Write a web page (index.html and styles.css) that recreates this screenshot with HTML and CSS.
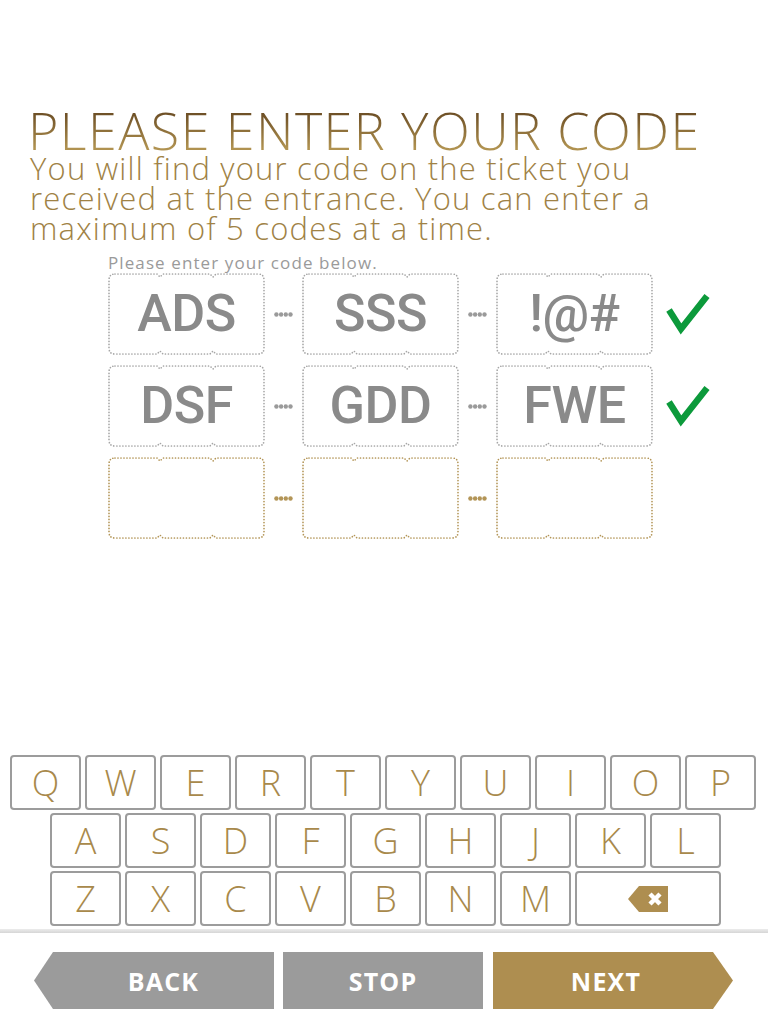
FILE: index.html
```html
<!DOCTYPE html>
<html>
<head>
<meta charset="utf-8">
<link rel="stylesheet" href="styles.css">
</head>
<body>
<svg class="defs" width="0" height="0" aria-hidden="true">
  <symbol id="ticket" viewBox="0 0 157 82">
    <path d="M7,1 H49 L52,4 L55,1 H102 L105,4 L108,1 H150 Q156,1 156,7 V75 Q156,81 150,81 H108 L105,78 L102,81 H55 L52,78 L49,81 H7 Q1,81 1,75 V7 Q1,1 7,1 Z" fill="none" stroke="currentColor" stroke-width="1.7" stroke-linecap="round" stroke-dasharray="0 3"/>
  </symbol>
  <symbol id="dots" viewBox="0 0 19 5">
    <circle cx="2.4" cy="2.5" r="2.2" fill="currentColor"/>
    <circle cx="7.1" cy="2.5" r="2.2" fill="currentColor"/>
    <circle cx="11.8" cy="2.5" r="2.2" fill="currentColor"/>
    <circle cx="16.5" cy="2.5" r="2.2" fill="currentColor"/>
  </symbol>
  <symbol id="check" viewBox="0 0 44 44">
    <polyline points="3,18 15,37 41,4" fill="none" stroke="currentColor" stroke-width="6.5"/>
  </symbol>
</svg>
<div class="page">
  <header class="header">
    <h1 class="title">PLEASE ENTER YOUR CODE</h1>
    <p class="subtitle">You will find your code on the ticket you<br>received at the entrance. You can enter a<br>maximum of 5 codes at a time.</p>
  </header>

  <section class="codes">
    <div class="hint">Please enter your code below.</div>
    <div class="code-row filled">
      <div class="box"><svg class="ticket"><use href="#ticket"/></svg><span class="code">ADS</span></div>
      <div class="link"><svg class="dots"><use href="#dots"/></svg></div>
      <div class="box"><svg class="ticket"><use href="#ticket"/></svg><span class="code">SSS</span></div>
      <div class="link"><svg class="dots"><use href="#dots"/></svg></div>
      <div class="box"><svg class="ticket"><use href="#ticket"/></svg><span class="code">!@#</span></div>
      <svg class="check"><use href="#check"/></svg>
    </div>
    <div class="code-row filled">
      <div class="box"><svg class="ticket"><use href="#ticket"/></svg><span class="code">DSF</span></div>
      <div class="link"><svg class="dots"><use href="#dots"/></svg></div>
      <div class="box"><svg class="ticket"><use href="#ticket"/></svg><span class="code">GDD</span></div>
      <div class="link"><svg class="dots"><use href="#dots"/></svg></div>
      <div class="box"><svg class="ticket"><use href="#ticket"/></svg><span class="code">FWE</span></div>
      <svg class="check"><use href="#check"/></svg>
    </div>
    <div class="code-row empty">
      <div class="box"><svg class="ticket"><use href="#ticket"/></svg></div>
      <div class="link"><svg class="dots"><use href="#dots"/></svg></div>
      <div class="box"><svg class="ticket"><use href="#ticket"/></svg></div>
      <div class="link"><svg class="dots"><use href="#dots"/></svg></div>
      <div class="box"><svg class="ticket"><use href="#ticket"/></svg></div>
    </div>
  </section>

  <section class="keyboard">
    <div class="kb-row first">
      <div class="key">Q</div><div class="key">W</div><div class="key">E</div><div class="key">R</div><div class="key">T</div><div class="key">Y</div><div class="key">U</div><div class="key">I</div><div class="key">O</div><div class="key">P</div>
    </div>
    <div class="kb-row">
      <div class="key">A</div><div class="key">S</div><div class="key">D</div><div class="key">F</div><div class="key">G</div><div class="key">H</div><div class="key">J</div><div class="key">K</div><div class="key">L</div>
    </div>
    <div class="kb-row">
      <div class="key">Z</div><div class="key">X</div><div class="key">C</div><div class="key">V</div><div class="key">B</div><div class="key">N</div><div class="key">M</div>
      <div class="key wide">
        <svg class="backspace" viewBox="0 0 40 26"><path d="M0,13 L11,0 H40 V26 H11 Z" fill="#ae8e50"/><path d="M22,8 L32,18 M32,8 L22,18" stroke="#fff" stroke-width="4.5"/></svg>
      </div>
    </div>
  </section>

  <div class="separator"></div>

  <footer class="footer">
    <div class="btn back">BACK</div>
    <div class="btn stop">STOP</div>
    <div class="btn next">NEXT</div>
  </footer>
</div>
</body>
</html>
```

FILE: styles.css
```css
html, body {
  margin: 0;
  padding: 0;
  background: #fff;
}

.defs {
  position: absolute;
  width: 0;
  height: 0;
  overflow: hidden;
}

.page {
  width: 768px;
  height: 1024px;
  display: flex;
  flex-direction: column;
  font-family: "Open Sans", "DejaVu Sans", sans-serif;
}

.header {
  padding: 104px 0 0 28px;
}

.title {
  margin: 0;
  font-size: 52px;
  line-height: 52px;
  font-weight: 300;
  letter-spacing: 1.45px;
  white-space: nowrap;
  background: linear-gradient(to bottom, #6f5127 20%, #b09250 85%);
  -webkit-background-clip: text;
  background-clip: text;
  color: transparent;
  display: inline-block;
}

.subtitle {
  margin: -3px 0 0 2px;
  font-size: 31px;
  line-height: 30px;
  font-weight: 300;
  letter-spacing: 1.2px;
  color: #a08245;
  white-space: nowrap;
}

.codes {
  padding-left: 108px;
}

.hint {
  margin-top: 10px;
  font-size: 17px;
  line-height: 20px;
  letter-spacing: 1.1px;
  color: #9a9a9a;
}

.code-row {
  display: flex;
  align-items: center;
  height: 82px;
  margin-bottom: 10px;
}

.box {
  position: relative;
  width: 157px;
  height: 82px;
  display: flex;
  align-items: center;
  justify-content: center;
}

.filled .box {
  color: #a6a6a6;
}

.filled .link {
  color: #9a9a9a;
}

.empty .box,
.empty .link {
  color: #b39557;
}

.ticket {
  position: absolute;
  left: 0;
  top: 0;
  width: 157px;
  height: 82px;
}

.code {
  position: relative;
  font-family: Roboto, "Liberation Sans", Arial, sans-serif;
  font-size: 52px;
  font-weight: 500;
  line-height: 52px;
  letter-spacing: -0.5px;
  color: #8a8a8a;
}

.link {
  width: 37px;
  display: flex;
  justify-content: center;
}

.dots {
  width: 19px;
  height: 5px;
}

.check {
  width: 44px;
  height: 44px;
  margin-left: 13px;
  color: #0c9a3b;
}

.keyboard {
  margin-top: auto;
  display: flex;
  flex-direction: column;
  gap: 3px;
}

.kb-row {
  display: flex;
  gap: 4px;
  padding-left: 50px;
}

.kb-row.first {
  padding-left: 10px;
}

.key {
  width: 71px;
  height: 55px;
  box-sizing: border-box;
  border: 2px solid #9c9c9c;
  border-radius: 4px;
  display: flex;
  align-items: center;
  justify-content: center;
  font-size: 36px;
  font-weight: 300;
  color: #a8894b;
}

.key.wide {
  width: 146px;
}

.backspace {
  width: 40px;
  height: 26px;
}

.separator {
  margin-top: 3px;
  height: 4px;
  background: linear-gradient(to bottom, #ececec, #d6d6d6);
}

.footer {
  display: flex;
  padding: 19px 0 15px 34px;
}

.btn {
  height: 57px;
  display: flex;
  align-items: center;
  justify-content: center;
  color: #fff;
  font-size: 25px;
  font-weight: 700;
  letter-spacing: 1.2px;
}

.back {
  width: 240px;
  padding-left: 19px;
  box-sizing: border-box;
  background: #9b9b9b;
  clip-path: polygon(19px 0, 100% 0, 100% 100%, 19px 100%, 0 50%);
}

.stop {
  width: 200px;
  margin-left: 9px;
  background: #9b9b9b;
}

.next {
  width: 240px;
  margin-left: 10px;
  padding-right: 14px;
  box-sizing: border-box;
  background: #ae8e50;
  clip-path: polygon(0 0, calc(100% - 20px) 0, 100% 50%, calc(100% - 20px) 100%, 0 100%);
}
```
